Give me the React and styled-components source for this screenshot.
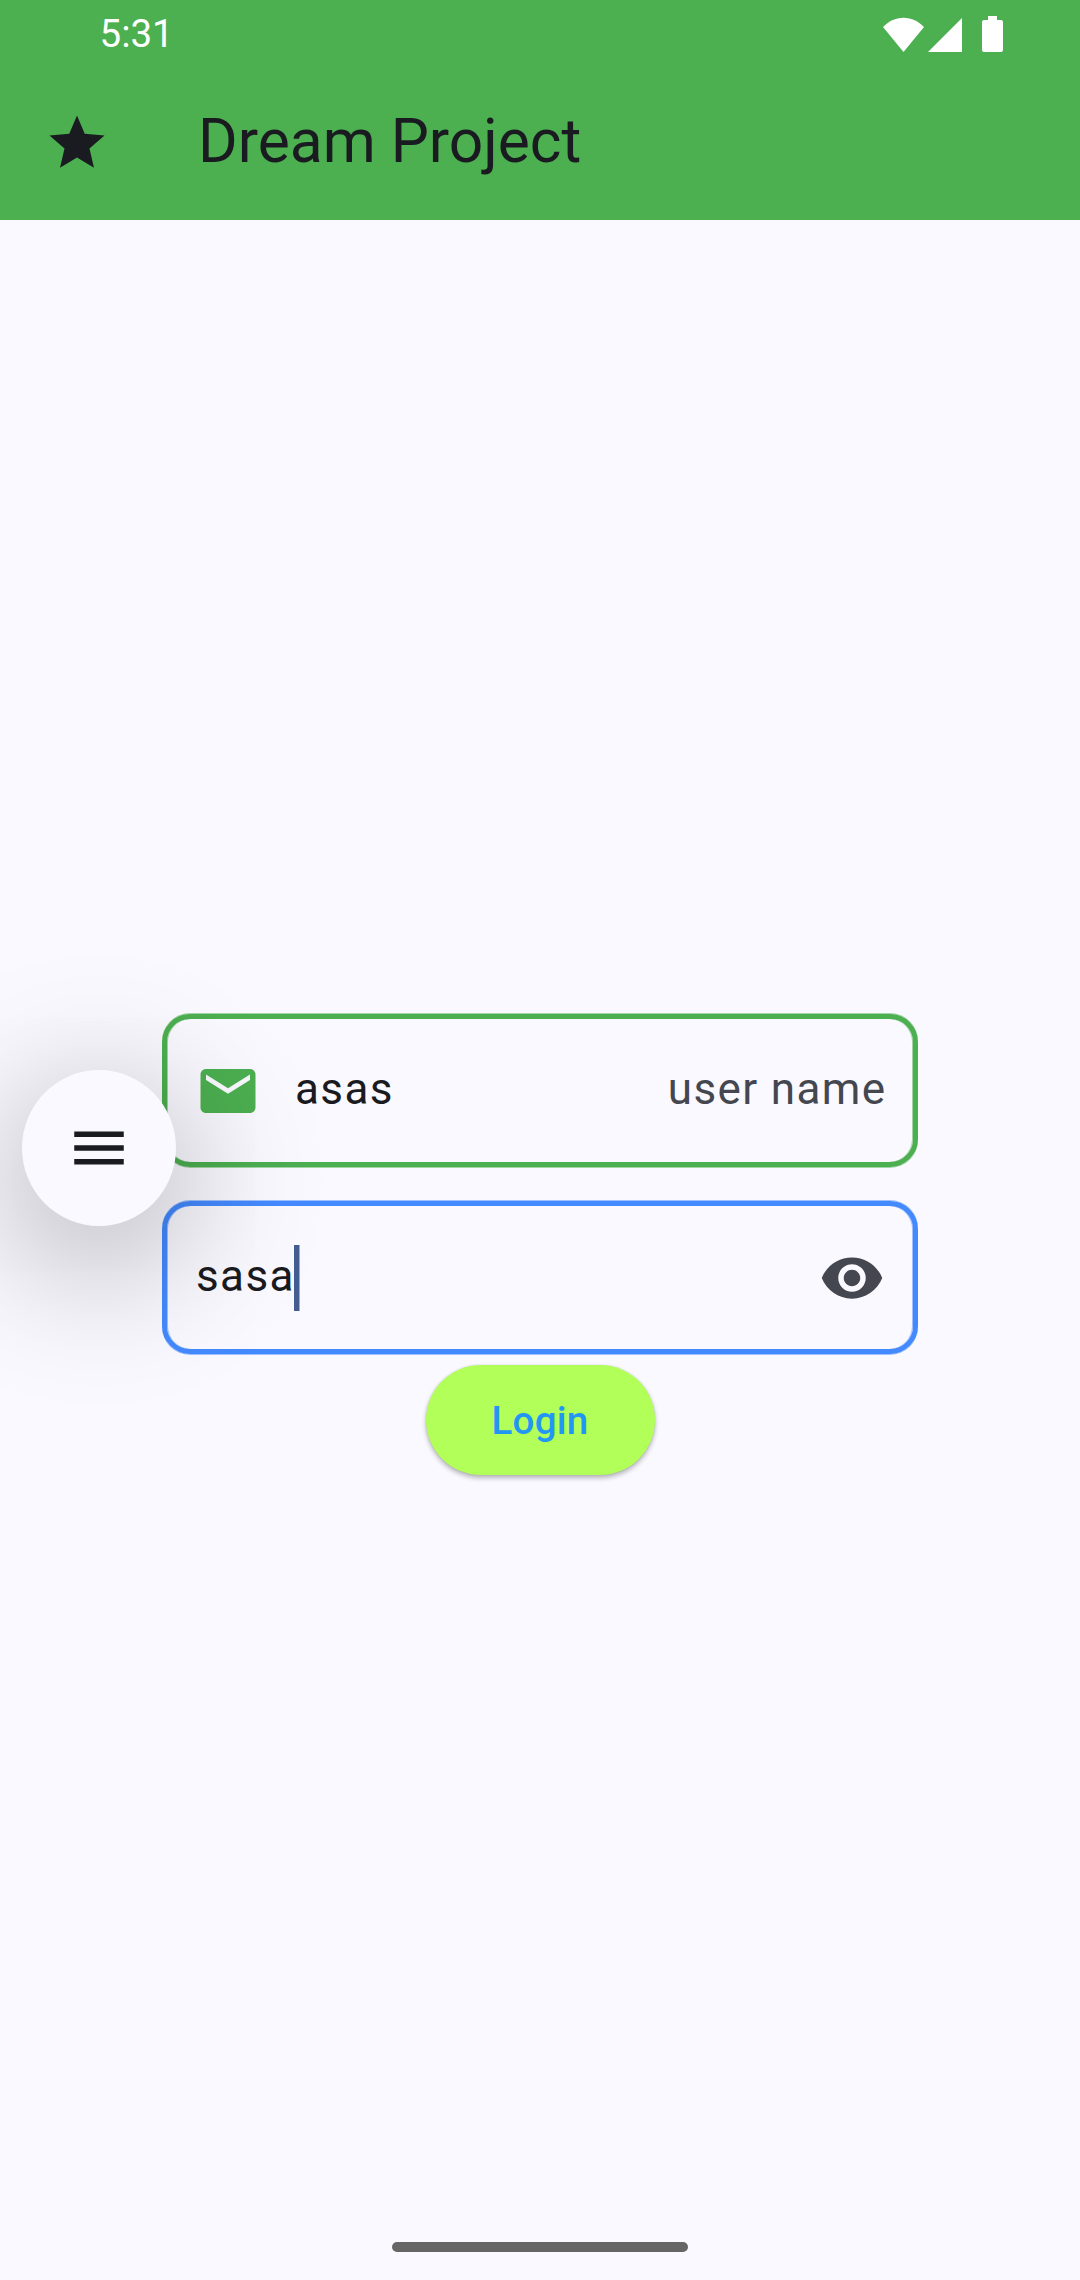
import React from "react";
import styled, { createGlobalStyle } from "styled-components";

const GlobalStyle = createGlobalStyle`
  *, *::before, *::after { box-sizing: border-box; }
  body { margin: 0; background: #faf9ff; }
`;

const Screen = styled.div`
  position: relative;
  display: flex;
  flex-direction: column;
  width: 1080px;
  height: 2280px;
  background: #faf9ff;
  color: #1a1b20;
  font-family: Roboto, "Noto Sans", sans-serif;
  overflow: hidden;
`;

const Header = styled.header`
  height: 220px;
  background: #4caf50;
`;

const StatusBar = styled.div`
  display: flex;
  justify-content: space-between;
  align-items: center;
  height: 66px;
  padding: 2px 77px 0 99.5px;
  color: #fff;
`;

const Clock = styled.time`
  font-size: 38.5px;
  line-height: 46px;
`;

const StatusIcons = styled.div`
  display: flex;
  align-items: center;
`;

const StatusIcon = styled.svg`
  display: block;
  width: ${(p) => p.$w}px;
  height: 36px;
  margin-left: ${(p) => p.$gap || 0}px;
  fill: #fff;
`;

const Toolbar = styled.div`
  display: flex;
  align-items: center;
  height: 154px;
  padding-left: 44px;
`;

const Icon = styled.svg`
  display: block;
  flex: none;
  width: 66px;
  height: 66px;
  fill: ${(p) => p.$color || "#1a1b20"};
`;

const Title = styled.h1`
  margin: 0 0 0 88px;
  padding-bottom: 4px;
  font-size: 60.5px;
  font-weight: 400;
  line-height: 77px;
  white-space: nowrap;
`;

const Form = styled.main`
  flex: 1;
  display: flex;
  flex-direction: column;
  align-items: center;
  padding-top: 794px;
`;

const Field = styled.div`
  display: flex;
  align-items: center;
  width: 756px;
  height: 153px;
  margin-bottom: ${(p) => p.$after}px;
  padding: 0 ${(p) => p.$end}px 0 28px;
  border: 5px solid ${(p) => p.$color};
  border-radius: 28px;
  box-shadow:
    0 1px 0 ${(p) => p.$color}80,
    0 -1px 0 ${(p) => p.$color}80,
    inset 1px 0 0 ${(p) => p.$color}80,
    inset -1px 0 0 ${(p) => p.$color}80;
`;

const FieldText = styled.span`
  padding: 0 0 4px ${(p) => p.$lead || 0}px;
  font-size: 44px;
  line-height: 66px;
  letter-spacing: 1.375px;
  color: ${(p) => p.$color || "#1a1b20"};
  white-space: nowrap;
`;

const Caret = styled.span`
  width: 6px;
  height: 66px;
  margin-left: -1px;
  background: linear-gradient(to right, #445e91 5px, #445e9180 5px);
`;

const Spacer = styled.span`
  flex: 1;
`;

const LoginButton = styled.button`
  width: 229px;
  height: 110px;
  padding: 0;
  border: 0;
  border-radius: 55px;
  background: #b2ff59;
  color: #2196f3;
  font: 500 38.5px/55px Roboto, "Noto Sans", sans-serif;
  letter-spacing: 0.275px;
  box-shadow: 0 3px 5px rgba(0, 0, 0, 0.28), 0 0 2px rgba(0, 0, 0, 0.12);
`;

const FloatingMenu = styled.button`
  position: absolute;
  left: 22px;
  top: 1070px;
  display: flex;
  align-items: center;
  justify-content: center;
  width: 154px;
  height: 156px;
  padding: 0;
  border: 0;
  border-radius: 50%;
  background: #faf9ff;
  box-shadow: 0 32px 142px 12px rgba(0, 0, 0, 0.29);
`;

const NavigationBar = styled.footer`
  display: flex;
  justify-content: center;
  height: 38px;
`;

const HomeHandle = styled.div`
  width: 296px;
  height: 10px;
  border-radius: 5px;
  background: #666;
`;

export default function App() {
  return (
    <>
      <GlobalStyle />
      <Screen>
        <Header>
          <StatusBar>
            <Clock>5:31</Clock>
            <StatusIcons>
              <StatusIcon $w={41} viewBox="0 0 41 36">
                <path d="M20.500 36 0 11C5.600 5.200 12.400 1.700 20.500 1.700S35.400 5.200 41 11Z" />
              </StatusIcon>
              <StatusIcon $w={34} $gap={4} viewBox="0 0 34 36">
                <path d="M34 2V36H0Z" />
              </StatusIcon>
              <StatusIcon $w={21} $gap={20} viewBox="0 0 21 36">
                <path d="M6 0h9v4h4a2 2 0 0 1 2 2v28a2 2 0 0 1-2 2H2a2 2 0 0 1-2-2V6a2 2 0 0 1 2-2h4Z" />
              </StatusIcon>
            </StatusIcons>
          </StatusBar>
          <Toolbar>
            <Icon viewBox="0 0 24 24">
              <path d="M12 17.270 18.180 21l-1.640-7.030L22 9.240l-7.190-.61L12 2 9.190 8.630 2 9.240l5.460 4.730L5.820 21z" />
            </Icon>
            <Title>Dream Project</Title>
          </Toolbar>
        </Header>

        <Form>
          <Field $color="#4caf50" $after={34} $end={26.5}>
            <Icon $color="#4caf50" viewBox="0 0 24 24">
              <path d="M20 4H4c-1.100 0-1.990.9-1.990 2L2 18c0 1.100.9 2 2 2h16c1.100 0 2-.9 2-2V6c0-1.100-.9-2-2-2zm0 4-8 5-8-5V6l8 5 8-5v2z" />
            </Icon>
            <FieldText $lead={34}>asas</FieldText>
            <Spacer />
            <FieldText $color="#44474f">user name</FieldText>
          </Field>
          <Field $color="#448aff" $after={11} $end={28}>
            <FieldText $lead={1}>sasa</FieldText>
            <Caret />
            <Spacer />
            <Icon $color="#44474f" viewBox="0 0 24 24">
              <path d="M12 4.500C7 4.500 2.730 7.610 1 12c1.730 4.390 6 7.500 11 7.500s9.270-3.110 11-7.500c-1.730-4.390-6-7.500-11-7.500zM12 17c-2.760 0-5-2.240-5-5s2.240-5 5-5 5 2.240 5 5-2.240 5-5 5zm0-8c-1.660 0-3 1.340-3 3s1.340 3 3 3 3-1.340 3-3-1.340-3-3-3z" />
            </Icon>
          </Field>
          <LoginButton type="button">Login</LoginButton>
        </Form>

        <NavigationBar>
          <HomeHandle />
        </NavigationBar>

        <FloatingMenu type="button" aria-label="Menu">
          <Icon viewBox="0 0 24 24">
            <path d="M3 18h18v-2H3v2zm0-5h18v-2H3v2zm0-7v2h18V6H3z" />
          </Icon>
        </FloatingMenu>
      </Screen>
    </>
  );
}
